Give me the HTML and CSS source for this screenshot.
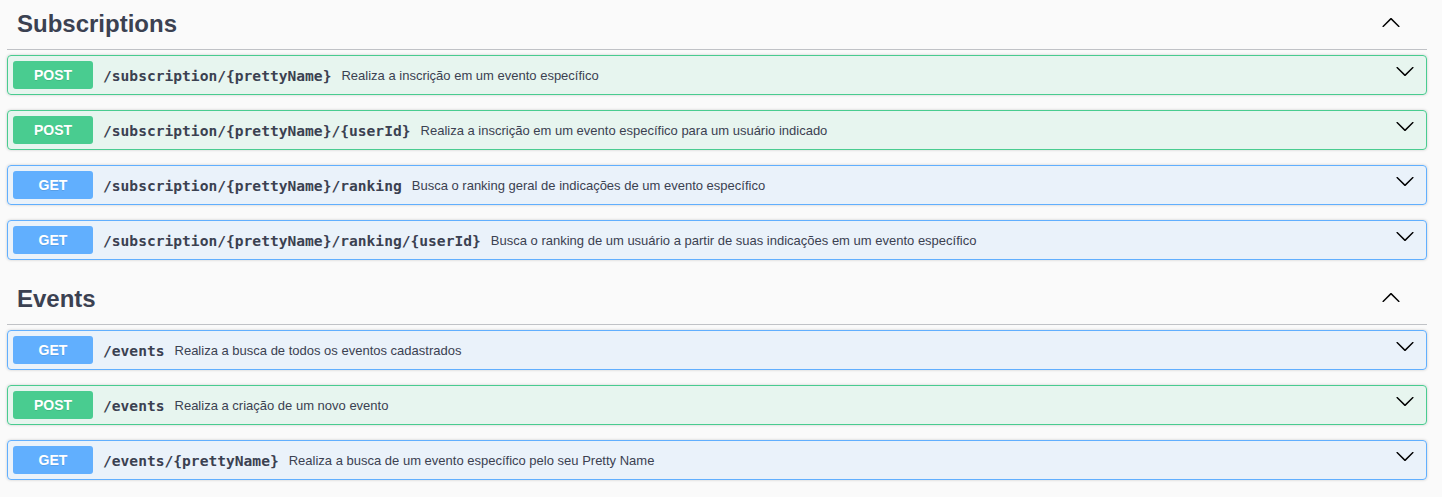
FILE: index.html
```html
<!DOCTYPE html>
<html lang="pt-BR">
<head>
<meta charset="utf-8">
<title>API</title>
<link rel="stylesheet" href="styles.css">
</head>
<body>
<div class="wrapper">
  <section class="tag-section">
    <h3 class="tag">
      <span class="tag-name">Subscriptions</span>
      <svg class="tag-arrow" width="20" height="20" viewBox="0 0 20 20" aria-hidden="true"><path d="M17.418 14.908c.272.268.709.268.979 0s.271-.701 0-.969l-7.908-7.83c-.27-.268-.707-.268-.979 0l-7.908 7.83c-.27.268-.27.701 0 .969.271.268.709.268.979 0L10 7.767l7.418 7.141z"/></svg>
    </h3>
    <div class="op op-post">
      <span class="method">POST</span>
      <span class="path">/subscription/{prettyName}</span>
      <span class="desc">Realiza a inscrição em um evento específico</span>
      <svg class="op-arrow" width="20" height="20" viewBox="0 0 20 20" aria-hidden="true"><path d="M17.418 6.109c.272-.268.709-.268.979 0s.271.701 0 .969l-7.908 7.83c-.27.268-.707.268-.979 0l-7.908-7.83c-.27-.268-.27-.701 0-.969.271-.268.709-.268.979 0L10 13.25l7.418-7.141z"/></svg>
    </div>
    <div class="op op-post">
      <span class="method">POST</span>
      <span class="path">/subscription/{prettyName}/{userId}</span>
      <span class="desc">Realiza a inscrição em um evento específico para um usuário indicado</span>
      <svg class="op-arrow" width="20" height="20" viewBox="0 0 20 20" aria-hidden="true"><path d="M17.418 6.109c.272-.268.709-.268.979 0s.271.701 0 .969l-7.908 7.83c-.27.268-.707.268-.979 0l-7.908-7.83c-.27-.268-.27-.701 0-.969.271-.268.709-.268.979 0L10 13.25l7.418-7.141z"/></svg>
    </div>
    <div class="op op-get">
      <span class="method">GET</span>
      <span class="path">/subscription/{prettyName}/ranking</span>
      <span class="desc">Busca o ranking geral de indicações de um evento específico</span>
      <svg class="op-arrow" width="20" height="20" viewBox="0 0 20 20" aria-hidden="true"><path d="M17.418 6.109c.272-.268.709-.268.979 0s.271.701 0 .969l-7.908 7.83c-.27.268-.707.268-.979 0l-7.908-7.83c-.27-.268-.27-.701 0-.969.271-.268.709-.268.979 0L10 13.25l7.418-7.141z"/></svg>
    </div>
    <div class="op op-get">
      <span class="method">GET</span>
      <span class="path">/subscription/{prettyName}/ranking/{userId}</span>
      <span class="desc">Busca o ranking de um usuário a partir de suas indicações em um evento específico</span>
      <svg class="op-arrow" width="20" height="20" viewBox="0 0 20 20" aria-hidden="true"><path d="M17.418 6.109c.272-.268.709-.268.979 0s.271.701 0 .969l-7.908 7.83c-.27.268-.707.268-.979 0l-7.908-7.83c-.27-.268-.27-.701 0-.969.271-.268.709-.268.979 0L10 13.25l7.418-7.141z"/></svg>
    </div>
  </section>
  <section class="tag-section">
    <h3 class="tag">
      <span class="tag-name">Events</span>
      <svg class="tag-arrow" width="20" height="20" viewBox="0 0 20 20" aria-hidden="true"><path d="M17.418 14.908c.272.268.709.268.979 0s.271-.701 0-.969l-7.908-7.83c-.27-.268-.707-.268-.979 0l-7.908 7.83c-.27.268-.27.701 0 .969.271.268.709.268.979 0L10 7.767l7.418 7.141z"/></svg>
    </h3>
    <div class="op op-get">
      <span class="method">GET</span>
      <span class="path">/events</span>
      <span class="desc">Realiza a busca de todos os eventos cadastrados</span>
      <svg class="op-arrow" width="20" height="20" viewBox="0 0 20 20" aria-hidden="true"><path d="M17.418 6.109c.272-.268.709-.268.979 0s.271.701 0 .969l-7.908 7.83c-.27.268-.707.268-.979 0l-7.908-7.83c-.27-.268-.27-.701 0-.969.271-.268.709-.268.979 0L10 13.25l7.418-7.141z"/></svg>
    </div>
    <div class="op op-post">
      <span class="method">POST</span>
      <span class="path">/events</span>
      <span class="desc">Realiza a criação de um novo evento</span>
      <svg class="op-arrow" width="20" height="20" viewBox="0 0 20 20" aria-hidden="true"><path d="M17.418 6.109c.272-.268.709-.268.979 0s.271.701 0 .969l-7.908 7.83c-.27.268-.707.268-.979 0l-7.908-7.83c-.27-.268-.27-.701 0-.969.271-.268.709-.268.979 0L10 13.25l7.418-7.141z"/></svg>
    </div>
    <div class="op op-get">
      <span class="method">GET</span>
      <span class="path">/events/{prettyName}</span>
      <span class="desc">Realiza a busca de um evento específico pelo seu Pretty Name</span>
      <svg class="op-arrow" width="20" height="20" viewBox="0 0 20 20" aria-hidden="true"><path d="M17.418 6.109c.272-.268.709-.268.979 0s.271.701 0 .969l-7.908 7.83c-.27.268-.707.268-.979 0l-7.908-7.83c-.27-.268-.27-.701 0-.969.271-.268.709-.268.979 0L10 13.25l7.418-7.141z"/></svg>
    </div>
  </section>
</div>
</body>
</html>
```

FILE: styles.css
```css
html, body {
  margin: 0;
  padding: 0;
  background: #fafafa;
}

body {
  font-family: "Liberation Sans", Arial, sans-serif;
  color: #3b4151;
}

.wrapper {
  padding: 0 15px 0 7px;
}

.tag-section {
  display: flex;
  flex-direction: column;
}

.tag {
  display: flex;
  align-items: center;
  margin: 0 0 5px;
  padding: 9px 26px 11px 10px;
  height: 29px;
  border-bottom: 1px solid rgba(59, 65, 81, 0.3);
  font-size: 24px;
  font-weight: 700;
  line-height: 29px;
  color: #3b4151;
}

.tag-name {
  flex: 1 1 auto;
}

.tag-arrow {
  flex: none;
  align-self: flex-start;
  margin-top: 3px;
  fill: #000;
}

.op {
  display: flex;
  align-items: center;
  margin: 0 0 15px;
  padding: 5px;
  height: 28px;
  border: 1px solid;
  border-radius: 4px;
  box-shadow: 0 0 3px rgba(0, 0, 0, 0.19);
}

.op-post {
  background: rgba(73, 204, 144, 0.1);
  border-color: #49cc90;
}

.op-get {
  background: rgba(97, 175, 254, 0.1);
  border-color: #61affe;
}

.method {
  flex: none;
  width: 80px;
  height: 28px;
  line-height: 28px;
  border-radius: 3px;
  text-align: center;
  color: #fff;
  font-size: 14px;
  font-weight: 700;
  text-shadow: 0 1px 0 rgba(0, 0, 0, 0.1);
}

.op-post .method {
  background: #49cc90;
}

.op-get .method {
  background: #61affe;
}

.path {
  flex: none;
  padding: 0 10px;
  font-family: "DejaVu Sans Mono", "Liberation Mono", monospace;
  font-size: 14.6px;
  font-weight: 700;
  color: #3b4151;
}

.desc {
  flex: 1 1 auto;
  font-size: 13px;
  color: #3b4151;
}

.op-arrow {
  flex: none;
  align-self: flex-start;
  margin-right: 6px;
  fill: #000;
}
```
